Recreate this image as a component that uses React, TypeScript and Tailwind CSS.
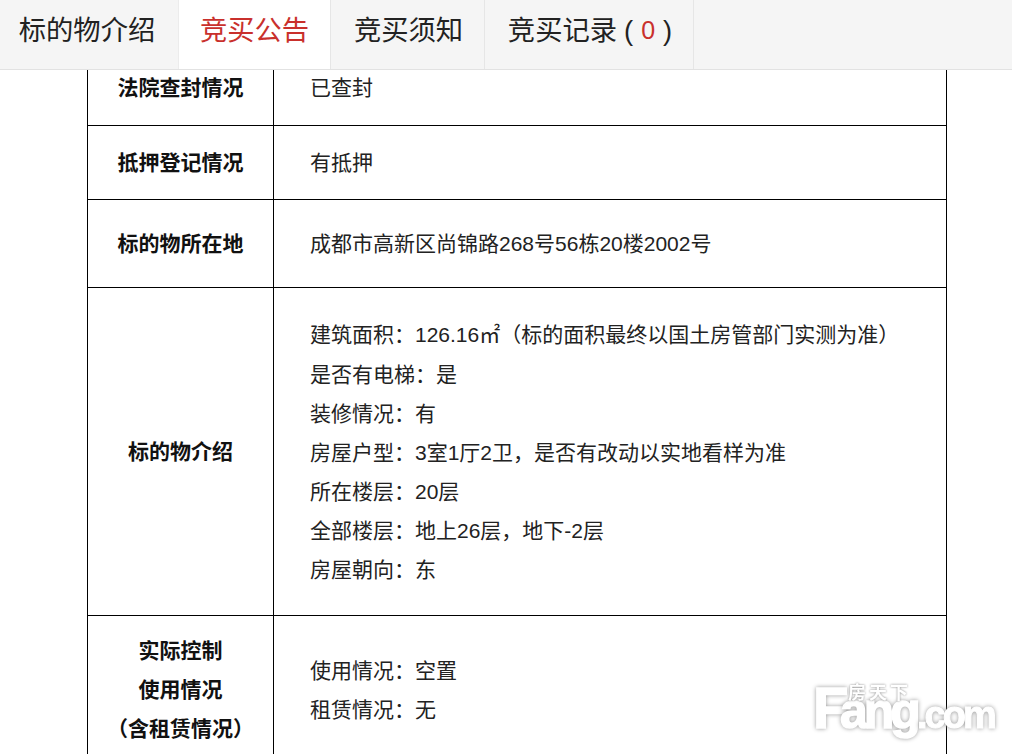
const font = { fontFamily: '"Liberation Sans", "Noto Sans CJK SC", sans-serif' }

function Row({ label, className, children }: { label: React.ReactNode; className: string; children: React.ReactNode }) {
  return (
    <div className={`flex border-b border-black ${className}`}>
      <div className="w-[186px] shrink-0 border-r border-black flex flex-col items-center justify-center text-[21px] leading-[39px] font-bold text-[#111]">
        {label}
      </div>
      <div className="flex-1 pl-[36px] flex flex-col justify-center text-[21px] leading-[39px] text-[#222]">{children}</div>
    </div>
  )
}

function Tab({ children, active, className }: { children: React.ReactNode; active?: boolean; className: string }) {
  return (
    <div className={`h-full flex items-center justify-center pb-[7px] border-r border-[#e6e6e6] ${active ? 'bg-white text-[#c9302c] relative' : ''} ${className}`}>
      {children}
    </div>
  )
}

export default function App() {
  return (
    <div className="w-[1012px] h-[754px] overflow-hidden bg-white relative" style={font}>
      <div className="h-[70px] bg-[#f5f5f5] border-b border-[#e2e2e2] flex text-[27.3px] text-[#222]">
        <Tab className="w-[174px] !border-r-0">标的物介绍</Tab>
        <div className="w-[4px]" />
        <Tab active className="w-[153px] border-l border-l-[#ececec]">竞买公告</Tab>
        <Tab className="w-[154px] pl-[2px]">竞买须知</Tab>
        <Tab className="w-[209px] pl-[2px]">
          竞买记录<span className="ml-[7px]">(</span>
          <span className="mx-[8px] text-[#c9302c] text-[25px]">0</span>)
        </Tab>
      </div>
      <div className="mx-[87px] w-[860px] border-x border-black">
        <Row label={<span className="-mt-[20px]">法院查封情况</span>} className="h-[56px]">
          <span className="-mt-[20px]">已查封</span>
        </Row>
        <Row label="抵押登记情况" className="h-[74px]">有抵押</Row>
        <Row label="标的物所在地" className="h-[88px]">成都市高新区尚锦路268号56栋20楼2002号</Row>
        <Row label="标的物介绍" className="h-[328px]">
          <div>
            <div className="mb-[1px]">建筑面积：126.16㎡（标的面积最终以国土房管部门实测为准）</div>
            <div>是否有电梯：是</div>
            <div>装修情况：有</div>
            <div>房屋户型：3室1厅2卫，是否有改动以实地看样为准</div>
            <div>所在楼层：20层</div>
            <div>全部楼层：地上26层，地下-2层</div>
            <div>房屋朝向：东</div>
          </div>
        </Row>
        <Row
          label={
            <>
              <span>实际控制</span>
              <span>使用情况</span>
              <span>（含租赁情况）</span>
            </>
          }
          className="h-[146px] !border-b-0"
        >
          <div className="pt-[2px]">使用情况：空置</div>
          <div>租赁情况：无</div>
        </Row>
      </div>
      {/* watermark */}
      <div
        className="absolute left-[813px] top-[687px] w-[35px] h-[42px] leading-[42px] font-bold text-white text-[58px] [-webkit-text-stroke:1.5px_white] [filter:drop-shadow(0_0_2px_#999)]"
        style={{ fontFamily: '"Liberation Sans", sans-serif' }}
      >
        F
      </div>
      <div
        className="absolute left-[840px] top-[702px] h-[18px] leading-[18px] whitespace-nowrap font-bold text-white text-[50px] tracking-[-4px] [-webkit-text-stroke:1.5px_white] [filter:drop-shadow(0_0_2px_#999)]"
        style={{ fontFamily: '"Liberation Sans", sans-serif' }}
      >
        ang
      </div>
      <div
        className="absolute left-[917px] top-[704px] h-[22px] leading-[22px] whitespace-nowrap font-bold text-white text-[38px] tracking-[-3px] [-webkit-text-stroke:1px_white] [filter:drop-shadow(0_0_2px_#999)]"
        style={{ fontFamily: '"Liberation Sans", sans-serif' }}
      >
        .com
      </div>
      <div className="absolute left-[848px] top-[685px] text-[18px] leading-[17px] font-bold text-white tracking-[3px] [filter:drop-shadow(0_0_1px_#888)]">
        房天下
      </div>
    </div>
  )
}
